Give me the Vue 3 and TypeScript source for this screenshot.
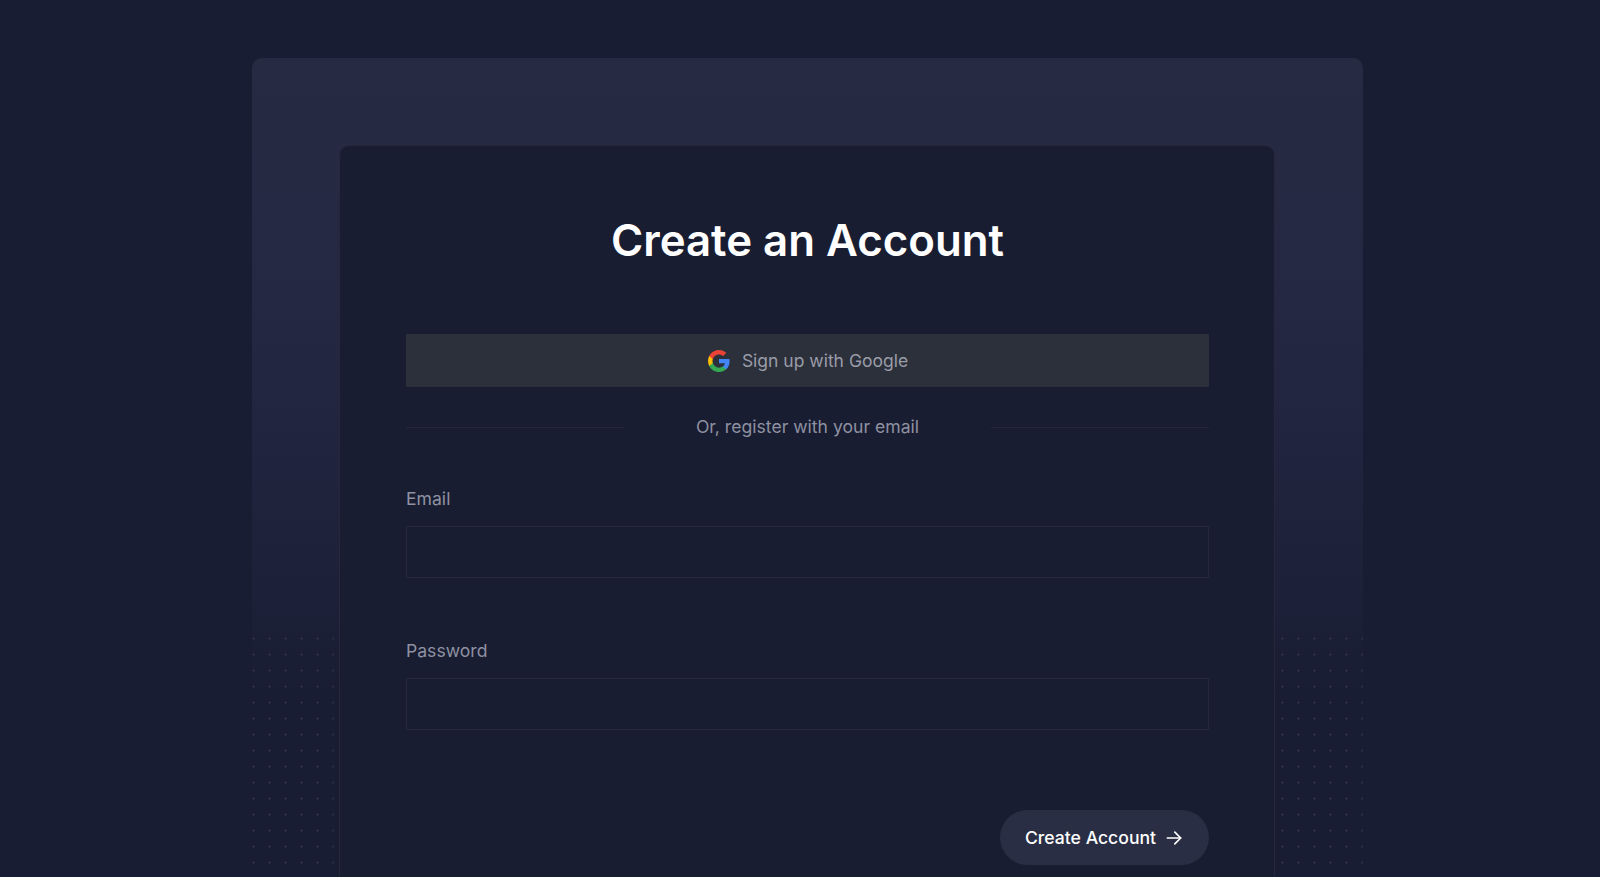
<script setup lang="ts">
import { ref } from 'vue'

const email = ref('')
const password = ref('')
</script>

<template>
  <div class="page">
    <div class="panel">
      <div class="dots dots-left"></div>
      <div class="dots dots-right"></div>
      <form class="card" @submit.prevent>
        <h1 class="title">Create an Account</h1>
        <button type="button" class="google-btn">
          <svg class="google-icon" viewBox="0 0 24 24" width="24" height="24">
            <path fill="#4285F4" d="M22.56 12.25c0-.78-.07-1.53-.2-2.25H12v4.26h5.92c-.26 1.37-1.04 2.53-2.21 3.31v2.77h3.57c2.08-1.92 3.28-4.74 3.28-8.09z" />
            <path fill="#34A853" d="M12 23c2.97 0 5.46-.98 7.28-2.66l-3.57-2.77c-.98.66-2.23 1.06-3.71 1.06-2.86 0-5.29-1.93-6.16-4.53H2.18v2.84C3.99 20.53 7.7 23 12 23z" />
            <path fill="#FBBC05" d="M5.84 14.09c-.22-.66-.35-1.36-.35-2.09s.13-1.43.35-2.09V7.07H2.18C1.43 8.55 1 10.22 1 12s.43 3.45 1.18 4.93l2.85-2.22.81-.62z" />
            <path fill="#EA4335" d="M12 5.38c1.62 0 3.06.56 4.21 1.64l3.15-3.15C17.45 2.09 14.97 1 12 1 7.7 1 3.99 3.47 2.18 7.07l3.66 2.84c.87-2.6 3.3-4.53 6.16-4.53z" />
          </svg>
          <span>Sign up with Google</span>
        </button>
        <div class="divider">
          <span class="line"></span>
          <span class="divider-text">Or, register with your email</span>
          <span class="line"></span>
        </div>
        <label class="field">
          <span class="label">Email</span>
          <input v-model="email" type="email" class="input" />
        </label>
        <label class="field">
          <span class="label">Password</span>
          <input v-model="password" type="password" class="input" />
        </label>
        <div class="actions">
          <button type="submit" class="submit-btn">
            <span>Create Account</span>
            <svg viewBox="0 0 24 24" width="20" height="20" fill="none" stroke="#fff" stroke-width="2" stroke-linecap="round" stroke-linejoin="round">
              <path d="M4 12h16" />
              <path d="M13 5l7 7-7 7" />
            </svg>
          </button>
        </div>
      </form>
    </div>
  </div>
</template>

<style>
html,
body {
  margin: 0;
  background: #181d33;
}
</style>

<style scoped>
.page {
  height: 877px;
  box-sizing: border-box;
  padding: 58px 0 0 252px;
  overflow: hidden;
  background: #181d33;
  font-family: Inter, "Liberation Sans", sans-serif;
}

.panel {
  position: relative;
  width: 1111px;
  height: 1000px;
  box-sizing: border-box;
  padding: 87px 88px 0 87px;
  border-radius: 10px 10px 0 0;
  background: linear-gradient(180deg, #262a43 0, #242842 24%, #20243e 39%, #1c2038 54%, #181d33 64%);
}

.dots {
  position: absolute;
  top: 579px;
  width: 82px;
  height: 300px;
  background-image: radial-gradient(circle at 1.5px 1.5px, #2a2d41 1px, transparent 1.5px);
  background-size: 16px 16px;
}

.dots-left {
  left: 0;
}

.dots-right {
  right: 0;
}

.card {
  position: relative;
  box-sizing: border-box;
  height: 900px;
  padding: 66px 65px 0 66px;
  border: 1px solid #25283c;
  border-radius: 10px 10px 0 0;
  background: #181d31;
}

.title {
  margin: 0 0 64px;
  color: #fff;
  font-size: 43.8px;
  font-weight: 600;
  line-height: 58px;
  text-align: center;
}

.google-btn {
  display: flex;
  align-items: center;
  justify-content: center;
  gap: 11px;
  width: 100%;
  height: 53px;
  padding: 0;
  border: none;
  border-radius: 1px;
  background: #2c303b;
  color: #9a9ca8;
  font-family: inherit;
  font-size: 17.5px;
}

.divider {
  display: flex;
  align-items: center;
  justify-content: space-between;
  height: 26px;
  margin: 26px 0 47px;
}

.line {
  width: 218px;
  height: 1px;
  margin-top: 2px;
  background: #25283c;
}

.divider-text {
  color: #8f91a2;
  font-size: 17.6px;
}

.field {
  display: block;
  margin-bottom: 60px;
}

.label {
  display: block;
  margin-bottom: 14px;
  color: #8f91a2;
  font-size: 17.6px;
  line-height: 26px;
}

.input {
  display: block;
  width: 100%;
  height: 52px;
  box-sizing: border-box;
  border: 1px solid #26283c;
  border-radius: 1px;
  outline: none;
  background: transparent;
  color: #fff;
  font-family: inherit;
  font-size: 17px;
}

.actions {
  display: flex;
  justify-content: flex-end;
  margin-top: 80px;
}

.submit-btn {
  display: flex;
  align-items: center;
  justify-content: center;
  gap: 8px;
  width: 209px;
  height: 55px;
  padding: 0;
  border: none;
  border-radius: 28px;
  background: #2a2e44;
  color: #fff;
  font-family: inherit;
  font-size: 17.6px;
  font-weight: 500;
}
</style>
